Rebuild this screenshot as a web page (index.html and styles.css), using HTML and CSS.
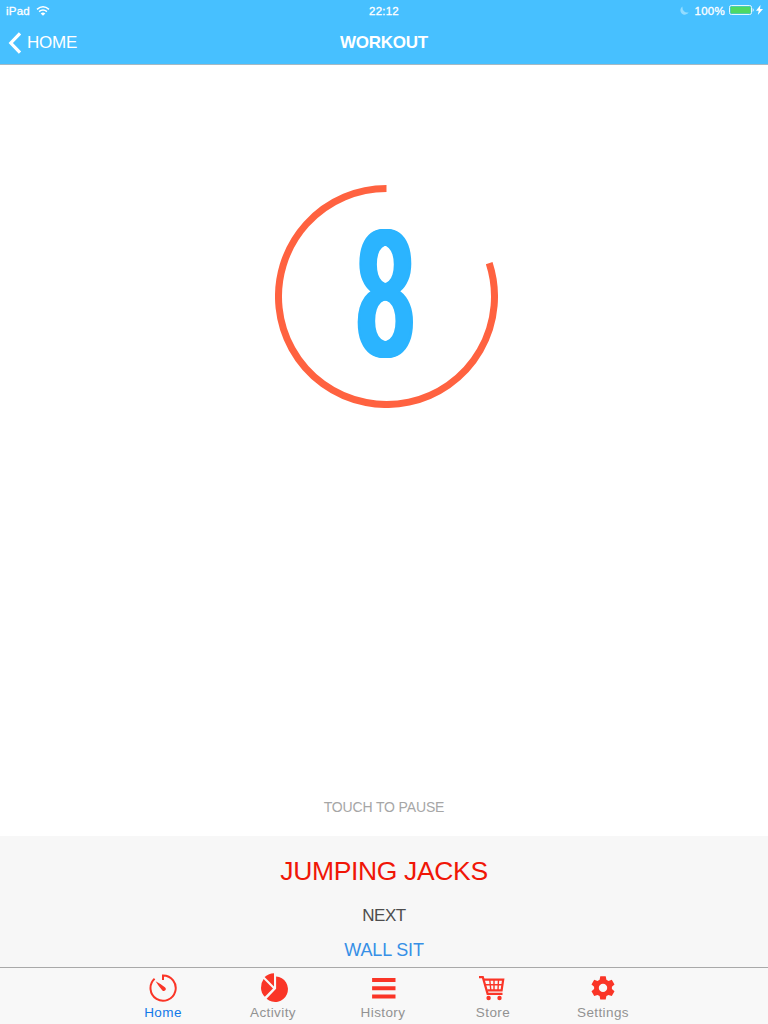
FILE: index.html
```
<!DOCTYPE html>
<html lang="en">
<head>
    <meta charset="UTF-8">
    <meta name="viewport" content="width=device-width, initial-scale=1.0">
    <title>Workout</title>
    <link rel="stylesheet" href="styles.css">
</head>
<body>
    <div class="app">
        <header>
            <div class="status-bar">
                <div class="status-left">
                    <span>iPad</span>
                    <svg width="14" height="10" viewBox="0 0 14 10" fill="none" stroke="#fff" stroke-width="1.5">
                        <path d="M1 3.4Q7-1.8 13 3.4M3.1 5.7Q7 2.5 10.9 5.7"/>
                        <path d="M4.7 7.4Q7 5.7 9.3 7.4L7 9.8Z" fill="#fff" stroke="none"/>
                    </svg>
                </div>
                <span class="clock">22:12</span>
                <div class="status-right">
                    <svg class="moon" width="9" height="9" viewBox="0 0 9 9"><path d="M2.6.4A4.4 4.4 0 1 0 8.7 6.2Q5.8 7 4 5.2 2 3.2 2.6.4Z" fill="#94dcff"/></svg>
                    <span>100%</span>
                    <svg class="battery" width="26" height="10" viewBox="0 0 26 10">
                        <rect x=".5" y=".5" width="22" height="9" rx="1.8" fill="none" stroke="#e4f7ff"/>
                        <rect x="1.5" y="1.5" width="20" height="7" rx=".8" fill="#4cd964"/>
                        <path d="M23.7 3Q25.7 5 23.7 7Z" fill="#fff"/>
                    </svg>
                    <svg class="bolt" width="7" height="10" viewBox="0 0 7 10"><path d="M4.5 0 0 5.7H2.7L1.8 10 7 4.1H4Z" fill="#fff"/></svg>
                </div>
            </div>
            <nav class="nav-bar">
                <a class="back">
                    <svg width="14" height="22" viewBox="0 0 14 22" fill="none" stroke="#fff" stroke-width="3.2"><path d="M12 1.4 2.8 11 12 20.6"/></svg>
                    <span>HOME</span>
                </a>
                <h1>WORKOUT</h1>
            </nav>
        </header>

        <main>
            <div class="timer">
                <svg width="223" height="223" viewBox="0 0 223 223" fill="none" stroke="#ff6240" stroke-width="7">
                    <path d="M111.5 3.5A108 108 0 1 0 214.2 78.1"/>
                </svg>
                <span class="count">8</span>
            </div>
            <p class="hint">TOUCH TO PAUSE</p>
        </main>

        <section class="exercise">
            <h2>JUMPING JACKS</h2>
            <p class="next">NEXT</p>
            <p class="next-name">WALL SIT</p>
        </section>

        <footer class="tab-bar">
            <a class="tab active">
                <svg width="30" height="30" viewBox="0 0 30 30">
                    <path d="M15 7V2.5A12.6 12.6 0 1 1 6.6 5.8" fill="none" stroke="#fa3527" stroke-width="2"/>
                    <path d="M7.6 8.2Q13.5 11.2 17.2 14.4A2 2 0 0 1 14.4 17.4Q10.8 13.5 7.6 8.2Z" fill="#fa3527"/>
                </svg>
                <span>Home</span>
            </a>
            <a class="tab">
                <svg width="30" height="30" viewBox="-1 0 30 30" fill="#fa3527">
                    <path d="M17.1 3.4A12.8 12.8 0 1 1 7.6 25.7L17.1 15.8Z"/>
                    <path d="M15 .3V13.6L5.6 4.1Q9.8.5 15 .3Z"/>
                    <path d="M4.6 6 14 15.4 5.8 23.8Q2 20 2 14.8 2 9.5 4.6 6Z"/>
                </svg>
                <span>Activity</span>
            </a>
            <a class="tab">
                <svg width="30" height="30" viewBox="-.6 0 30 30" fill="#fa3527">
                    <path d="M3.5 5h23.4v4h-23.4zM3.5 13.2h23.4v4h-23.4zM3.5 21.5h23.4v4h-23.4z"/>
                </svg>
                <span>History</span>
            </a>
            <a class="tab">
                <svg width="30" height="30" viewBox="0 0 30 30" fill="none" stroke="#fa3527" stroke-width="2.2">
                    <path d="M1 4.2H4.8L9.6 20.8H24.5"/>
                    <path d="M5.5 6.7H25.2L23.6 17.3H9.3"/>
                    <path d="M7 11.8H24.4M11.8 7 12.8 17M16 7V17M20.5 7 20 17" stroke-width="1.4"/>
                    <circle cx="10.6" cy="25" r="2.2" fill="#fa3527" stroke="none"/>
                    <circle cx="21.5" cy="25" r="2.2" fill="#fa3527" stroke="none"/>
                </svg>
                <span>Store</span>
            </a>
            <a class="tab">
                <svg width="30" height="30" viewBox="0 0 30 30">
                    <path d="M12.3 3.3h5.4l.7 3.4 2.1 1.2 3.3-1.1 2.7 4.7-2.6 2.2v2.4l2.6 2.2-2.7 4.7-3.3-1.1-2.1 1.2-.7 3.5h-5.4l-.7-3.5-2.1-1.2L6.2 23l-2.7-4.7 2.6-2.2v-2.4l-2.6-2.2 2.7-4.7 3.3 1.1 2.1-1.2ZM15 10.7a4.2 4.2 0 1 0 0 8.4 4.2 4.2 0 0 0 0-8.4Z" fill="#fa3527" fill-rule="evenodd"/>
                </svg>
                <span>Settings</span>
            </a>
        </footer>
    </div>
</body>
</html>
```

FILE: styles.css
```
* {
    box-sizing: border-box;
}
body {
    margin: 0;
    font-family: "Liberation Sans", Arial, sans-serif;
    background-color: #fff;
}
h1, h2, p {
    margin: 0;
    font-weight: normal;
}
svg {
    display: block;
    flex-shrink: 0;
}
.app {
    display: flex;
    flex-direction: column;
    height: 1024px;
}
header {
    height: 65px;
    background-color: #47c0ff;
    border-bottom: 1px solid #a5b9c4;
    color: #fff;
}
.status-bar, .nav-bar {
    display: grid;
    grid-template-columns: 1fr auto 1fr;
    align-items: center;
}
.status-bar {
    height: 20px;
    padding: 1px 5px 0 6px;
    font-size: 11.5px;
    letter-spacing: 0.25px;
    -webkit-text-stroke: 0.3px #fff;
}
.status-left {
    display: flex;
    align-items: center;
    gap: 6px;
}
.clock {
    margin-right: 1px;
}
.status-right {
    display: flex;
    align-items: center;
    justify-content: flex-end;
}
.moon {
    margin-right: 6px;
}
.battery {
    margin: -2px 1px 0 4px;
}
.bolt {
    margin-top: -1px;
}
.nav-bar {
    height: 45px;
    padding: 1px 8px 0;
}
.back {
    display: flex;
    align-items: center;
    gap: 5px;
    font-size: 17px;
    letter-spacing: -0.2px;
}
.back svg {
    margin-top: -1px;
}
.nav-bar h1 {
    font-size: 17px;
    font-weight: bold;
    letter-spacing: -0.25px;
}
main {
    flex: 1;
    display: flex;
    flex-direction: column;
    align-items: center;
    justify-content: space-between;
    padding: 120px 0 20px;
}
.timer {
    display: grid;
    place-items: center;
    margin-left: 5px;
}
.timer svg, .count {
    grid-area: 1 / 1;
}
/* condensed digit: sideways shadows fill out the narrow stems */
.count {
    font-family: Roboto, sans-serif;
    font-size: 177px;
    font-weight: 500;
    line-height: 1;
    color: #2bb4ff;
    text-shadow: 2px 0 #2bb4ff, -2px 0 #2bb4ff, 4px 0 #2bb4ff, -4px 0 #2bb4ff;
    transform: translate(-1px, -1.5px) scaleX(0.61);
}
.hint {
    font-size: 14px;
    line-height: 18px;
    letter-spacing: -0.15px;
    color: #a6a6a6;
}
.exercise {
    height: 131px;
    padding-top: 19px;
    background-color: #f7f7f7;
    text-align: center;
}
.exercise h2 {
    font-size: 26.5px;
    line-height: 32px;
    letter-spacing: -0.35px;
    color: #f01607;
}
.next {
    margin-top: 19px;
    font-size: 17px;
    line-height: 20px;
    letter-spacing: -0.5px;
    color: #4d4d4d;
}
.next-name {
    margin-top: 13px;
    font-size: 18px;
    line-height: 22px;
    letter-spacing: -0.15px;
    color: #368fe6;
}
.tab-bar {
    display: flex;
    justify-content: center;
    height: 57px;
    padding-right: 2px;
    border-top: 1px solid #a9a9a9;
    background-color: #f8f8f8;
}
.tab {
    width: 110px;
    display: flex;
    flex-direction: column;
    align-items: center;
    padding-top: 5px;
    font-size: 13.5px;
    line-height: 20px;
    letter-spacing: 0.4px;
    color: #929292;
}
.tab.active {
    color: #1279e8;
}
```
